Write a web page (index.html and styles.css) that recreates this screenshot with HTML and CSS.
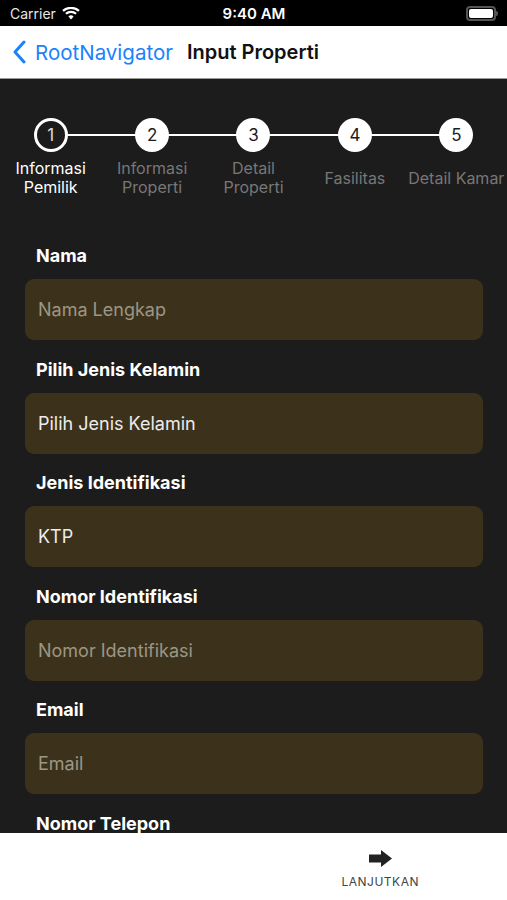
FILE: index.html
```html
<!DOCTYPE html>
<html>
<head>
	<title>Input Properti</title>
	<link rel="stylesheet" href="styles.css">
</head>
<body>
	<div class="status-bar">
		<div class="status-left">
			<span>Carrier</span>
			<svg class="wifi" width="18" height="13" viewBox="0 0 18 13">
				<path d="M9 12.5l2.6-3.1a4 4 0 0 0-5.2 0z" fill="#fff"/>
				<path d="M3.9 6.8a7.6 7.6 0 0 1 10.2 0" stroke="#fff" stroke-width="2.2" fill="none"/>
				<path d="M1 3.9a12 12 0 0 1 16 0" stroke="#fff" stroke-width="2.2" fill="none"/>
			</svg>
		</div>
		<div class="status-time">9:40 AM</div>
		<div class="status-right">
			<div class="battery"><div class="battery-fill"></div></div>
			<div class="battery-nub"></div>
		</div>
	</div>

	<div class="nav-bar">
		<div class="nav-back">
			<svg width="14" height="24" viewBox="0 0 14 24">
				<path d="M12 2L3 12l9 10" stroke="#1a82fb" stroke-width="3" fill="none" stroke-linecap="round" stroke-linejoin="round"/>
			</svg>
			<span>RootNavigator</span>
		</div>
		<div class="nav-title">Input Properti</div>
	</div>

	<div class="content">
		<div class="stepper">
			<div class="step active">
				<div class="step-circle">1</div>
				<div class="step-label">Informasi Pemilik</div>
			</div>
			<div class="step">
				<div class="step-circle">2</div>
				<div class="step-label">Informasi Properti</div>
			</div>
			<div class="step">
				<div class="step-circle">3</div>
				<div class="step-label">Detail Properti</div>
			</div>
			<div class="step">
				<div class="step-circle">4</div>
				<div class="step-label">Fasilitas</div>
			</div>
			<div class="step last">
				<div class="step-circle">5</div>
				<div class="step-label">Detail Kamar</div>
			</div>
		</div>

		<form class="form">
			<label class="field-label">Nama</label>
			<div class="field-input placeholder">Nama Lengkap</div>

			<label class="field-label">Pilih Jenis Kelamin</label>
			<div class="field-input">Pilih Jenis Kelamin</div>

			<label class="field-label">Jenis Identifikasi</label>
			<div class="field-input">KTP</div>

			<label class="field-label">Nomor Identifikasi</label>
			<div class="field-input placeholder">Nomor Identifikasi</div>

			<label class="field-label">Email</label>
			<div class="field-input placeholder">Email</div>

			<label class="field-label">Nomor Telepon</label>
			<div class="field-input"></div>
		</form>
	</div>

	<div class="bottom-bar">
		<div></div>
		<button class="next-button" type="button">
			<svg width="23" height="17" viewBox="0 0 23 17">
				<path d="M0 4.5h12V0l11 8.5L12 17v-4.5H0z" fill="#222"/>
			</svg>
			<span>LANJUTKAN</span>
		</button>
	</div>
</body>
</html>
```

FILE: styles.css
```css
body {
	margin: 0;
	height: 900px;
	display: flex;
	flex-direction: column;
	font-family: Inter, "Noto Sans", sans-serif;
	overflow: hidden;
}

.status-bar {
	height: 26px;
	background-color: #000;
	color: #fff;
	display: grid;
	grid-template-columns: 1fr auto 1fr;
	align-items: center;
	padding: 0 9px 0 10px;
	font-size: 14px;
}

.status-left {
	display: flex;
	align-items: center;
	gap: 6px;
	color: #e6e6e6;
}

.status-time {
	font-size: 15px;
	font-weight: 600;
}

.status-right {
	display: flex;
	justify-content: flex-end;
	align-items: center;
}

.battery {
	width: 24px;
	height: 9px;
	border: 2px solid #555;
	border-radius: 4px;
	padding: 1px;
	box-sizing: content-box;
}

.battery-fill {
	width: 100%;
	height: 100%;
	background-color: #fff;
	border-radius: 2px;
}

.battery-nub {
	width: 2px;
	height: 5px;
	background-color: #555;
	border-radius: 0 2px 2px 0;
}

.nav-bar {
	height: 52px;
	background-color: #fff;
	border-bottom: 1px solid #9a9a9a;
	display: flex;
	align-items: center;
	padding-left: 12px;
	gap: 14px;
}

.nav-back {
	display: flex;
	align-items: center;
	gap: 9px;
	color: #1a82fb;
	font-size: 20.5px;
}

.nav-title {
	font-size: 20px;
	font-weight: 600;
	color: #111;
}

.content {
	flex: 1;
	background-color: #1c1c1c;
	overflow: hidden;
}

.stepper {
	display: grid;
	grid-template-columns: repeat(5, 1fr);
	padding-top: 39px;
}

.step {
	position: relative;
	display: flex;
	flex-direction: column;
	align-items: center;
	gap: 7px;
}

.step::after {
	content: "";
	position: absolute;
	top: 16px;
	left: 50%;
	width: 100%;
	height: 2px;
	background-color: #fff;
}

.step.last::after {
	display: none;
}

.step-circle {
	position: relative;
	z-index: 1;
	width: 34px;
	height: 34px;
	box-sizing: border-box;
	border-radius: 50%;
	background-color: #fff;
	color: #1c1c1c;
	display: flex;
	align-items: center;
	justify-content: center;
	font-size: 17px;
}

.active .step-circle {
	background-color: #1c1c1c;
	border: 3px solid #fff;
	color: #ddd;
}

.step-label {
	height: 38px;
	display: flex;
	align-items: center;
	text-align: center;
	font-size: 16px;
	line-height: 19px;
	color: #777;
}

.active .step-label {
	color: #fff;
}

.form {
	padding: 48px 24px 0 25px;
	display: flex;
	flex-direction: column;
}

.field-label {
	font-size: 18px;
	line-height: 22px;
	font-weight: 700;
	color: #fff;
	padding-left: 11px;
	margin-bottom: 12px;
}

.field-input {
	height: 61px;
	box-sizing: border-box;
	border-radius: 9px;
	background-color: #3c321b;
	color: #ececec;
	font-size: 18px;
	display: flex;
	align-items: center;
	padding-left: 13px;
	margin-bottom: 18.6px;
}

.field-input.placeholder {
	color: #9c9685;
}

.bottom-bar {
	height: 67px;
	flex-shrink: 0;
	background-color: #fff;
	display: grid;
	grid-template-columns: 1fr 1fr;
}

.next-button {
	background: none;
	border: none;
	display: flex;
	flex-direction: column;
	align-items: center;
	padding-top: 17px;
	gap: 7px;
	font-family: Inter, "Noto Sans", sans-serif;
	font-size: 12px;
	color: #444;
	letter-spacing: 0.5px;
	cursor: pointer;
}
```
